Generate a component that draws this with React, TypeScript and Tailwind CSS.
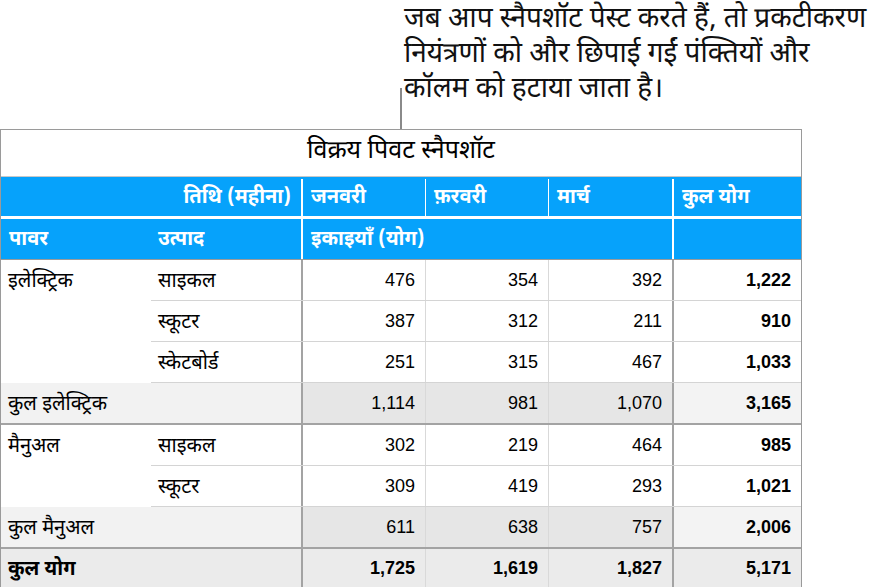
const dev = "font-['Noto_Sans_Devanagari','Lohit_Devanagari','Noto_Sans',sans-serif]"
const num = "font-['Liberation_Sans',Arial,sans-serif]"

type Row = { product: string; values: number[] }
type Group = { power: string; rows: Row[]; total: number[] }

const groups: Group[] = [
  {
    power: 'इलेक्ट्रिक',
    rows: [
      { product: 'साइकल', values: [476, 354, 392, 1222] },
      { product: 'स्कूटर', values: [387, 312, 211, 910] },
      { product: 'स्केटबोर्ड', values: [251, 315, 467, 1033] },
    ],
    total: [1114, 981, 1070, 3165],
  },
  {
    power: 'मैनुअल',
    rows: [
      { product: 'साइकल', values: [302, 219, 464, 985] },
      { product: 'स्कूटर', values: [309, 419, 293, 1021] },
    ],
    total: [611, 638, 757, 2006],
  },
]
const grand = [1725, 1619, 1827, 5171]

const fmt = (n: number) => n.toLocaleString('en-US')

function Values({ values, sub }: { values: number[]; sub?: boolean }) {
  const shade = sub ? 'bg-[#e6e6e6]' : ''
  return (
    <>
      <div className={`flex w-[124px] items-center justify-end border-l-2 border-[#a3a3a3] pr-[10px] ${shade}`}>{fmt(values[0])}</div>
      <div className={`flex w-[123px] items-center justify-end border-l border-[#d9d9d9] pr-[10px] ${shade}`}>{fmt(values[1])}</div>
      <div className={`flex w-[124px] items-center justify-end border-l border-[#d9d9d9] pr-[10px] ${shade}`}>{fmt(values[2])}</div>
      <div className={`flex flex-1 items-center justify-end border-l-2 border-[#a3a3a3] pr-[10px] font-bold ${sub ? 'bg-[#f3f3f3]' : ''}`}>{fmt(values[3])}</div>
    </>
  )
}

function GroupBlock({ g }: { g: Group }) {
  return (
    <div className="border-b-2 border-[#a3a3a3]">
      <div className="flex">
        <div className={`flex h-[41px] w-[150px] items-center pl-[7px] pt-[3px] text-[20px] text-black ${dev}`}>{g.power}</div>
        <div className="flex flex-1 flex-col">
          {g.rows.map((r, i) => (
            <div key={i} className={`flex h-[41px] border-b border-[#d4d4d4] text-[18px] ${num}`}>
              <div className={`flex w-[150px] items-center pl-[7px] pt-[3px] text-[20px] ${dev}`}>{r.product}</div>
              <Values values={r.values} />
            </div>
          ))}
        </div>
      </div>
      <div className={`flex h-[40px] text-[18px] ${num}`}>
        <div className={`flex w-[300px] items-center bg-[#f2f2f2] pl-[7px] pt-[3px] text-[20px] ${dev}`}>कुल {g.power}</div>
        <Values values={g.total} sub />
      </div>
    </div>
  )
}

export default function App() {
  return (
    <div className="relative h-[587px] w-[873px] overflow-hidden bg-white text-black">
      <div className={`pl-[404px] pt-[3px] text-[28px] leading-[35px] text-[#111] ${dev}`}>
        <div>जब आप स्नैपशॉट पेस्ट करते हैं, तो प्रकटीकरण</div>
        <div>नियंत्रणों को और छिपाई गईं पंक्तियों और</div>
        <div>कॉलम को हटाया जाता है।</div>
      </div>
      <div className="absolute left-[400px] top-[88px] h-[42px] w-[2px] bg-[#8a8a8a]" />

      <div className="absolute left-0 top-[129px] w-[802px] border border-[#9a9a9a] bg-white">
        <div className={`flex h-[47px] items-center justify-center border-b border-[#c8c8c8] text-[25px] text-black ${dev}`}>
          विक्रय पिवट स्नैपशॉट
        </div>
        <div className={`flex h-[39px] bg-[#06a2fb] pt-[2px] text-[20px] font-bold text-white ${dev}`}>
          <div className="flex w-[300px] items-center justify-end pr-[10px]">तिथि (महीना)</div>
          <div className="flex w-[124px] items-center border-l-2 border-white pl-[8px]">जनवरी</div>
          <div className="flex w-[123px] items-center border-l border-white pl-[8px]">फ़रवरी</div>
          <div className="flex w-[124px] items-center border-l border-white pl-[8px]">मार्च</div>
          <div className="flex flex-1 items-center border-l-2 border-white pl-[8px]">कुल योग</div>
        </div>
        <div className={`flex h-[44px] border-t-[3px] border-b border-t-white border-b-[#9a9a9a] bg-[#06a2fb] text-[20px] font-bold text-white ${dev}`}>
          <div className="flex w-[150px] items-center pl-[8px] pt-[2px]">पावर</div>
          <div className="flex w-[150px] items-center pl-[7px] pt-[2px]">उत्पाद</div>
          <div className="flex w-[371px] items-center border-l-2 border-white pl-[8px] pt-[2px]">इकाइयाँ (योग)</div>
          <div className="flex-1 border-l-2 border-white" />
        </div>
        {groups.map((g, i) => (
          <GroupBlock key={i} g={g} />
        ))}
        <div className={`flex h-[39px] bg-[#ebebeb] text-[18px] font-bold ${num}`}>
          <div className={`flex w-[300px] items-center pl-[7px] pt-[3px] text-[20px] ${dev}`}>कुल योग</div>
          <Values values={grand} />
        </div>
      </div>
    </div>
  )
}
